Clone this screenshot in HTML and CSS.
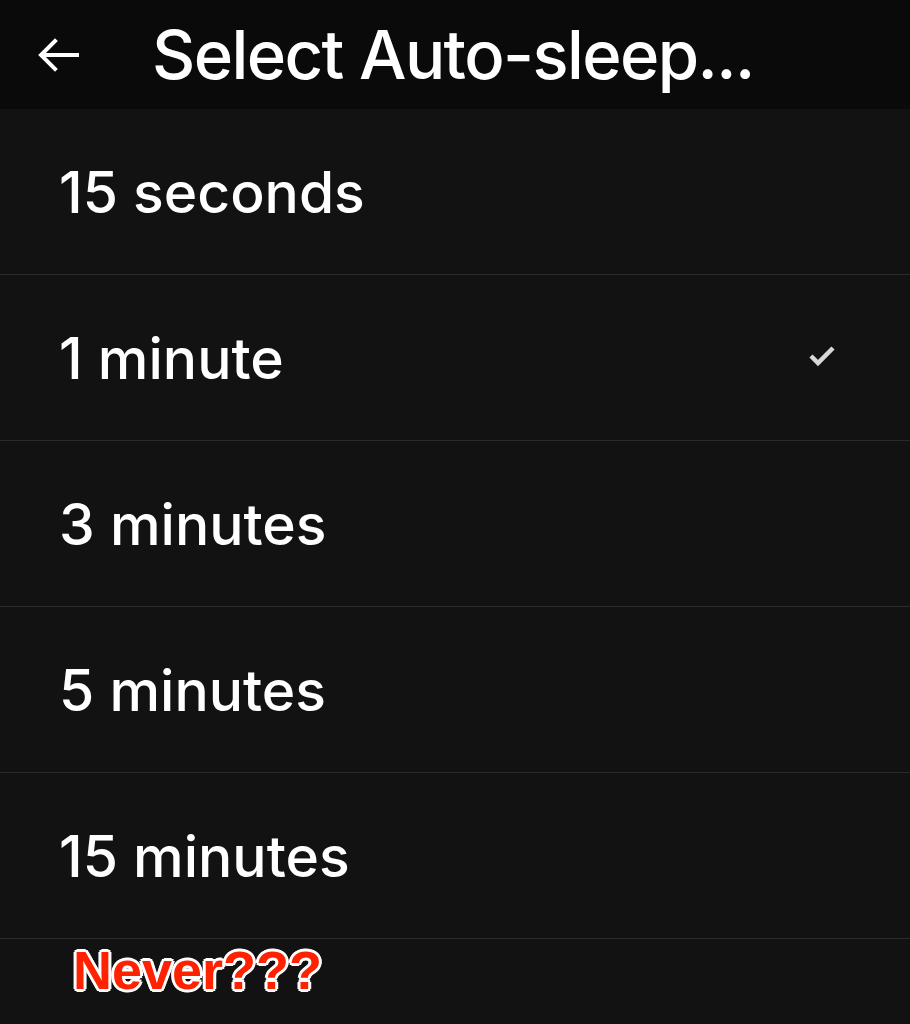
FILE: index.html
```html
<!DOCTYPE html>
<html lang="en">
<head>
    <meta charset="UTF-8">
    <meta name="viewport" content="width=device-width, initial-scale=1.0">
    <title>Select Auto-sleep</title>
    <link rel="stylesheet" href="styles.css">
</head>
<body>
    <div class="topbar">
        <span class="back">
            <svg width="42" height="36" viewBox="0 0 42 36">
                <path d="M40 18H5M18 4L4 18l14 14" fill="none" stroke="#fff" stroke-width="4" stroke-linecap="square"/>
            </svg>
        </span>
        <h1 class="title">Select Auto-sleep...</h1>
    </div>

    <ul class="options">
        <li class="option">15 seconds</li>
        <li class="option">1 minute
            <svg class="check" width="28" height="22" viewBox="0 0 28 22">
                <path d="M3 11l7 7L25 3" fill="none" stroke="#d8d8d8" stroke-width="4.5"/>
            </svg>
        </li>
        <li class="option">3 minutes</li>
        <li class="option">5 minutes</li>
        <li class="option">15 minutes</li>
    </ul>

    <div class="never">Never???</div>
</body>
</html>
```

FILE: styles.css
```css
body {
    margin: 0;
    background-color: #121212;
    color: #fff;
    font-family: Inter, "Noto Sans", sans-serif;
    height: 1024px;
    overflow: hidden;
}
.topbar {
    height: 109px;
    background-color: #0a0a0a;
    display: flex;
    align-items: center;
}
.back {
    width: 152px;
    display: flex;
    padding-left: 37px;
    box-sizing: border-box;
}
.title {
    margin: 0;
    font-size: 67px;
    font-weight: 500;
    letter-spacing: -1.6px;
}
.options {
    list-style: none;
    margin: 0;
    padding: 0;
}
.option {
    border-bottom: 1px solid #2a2a2a;
    display: flex;
    align-items: center;
    justify-content: space-between;
    padding: 2px 74px 0 59px;
    box-sizing: border-box;
    height: 166px;
    font-size: 57px;
    font-weight: 500;
}
.check {
    margin-top: -6px;
}
.never {
    padding: 0 0 0 73px;
    font-family: "Liberation Sans", Arial, sans-serif;
    font-weight: bold;
    font-size: 54px;
    color: #ff2200;
    text-shadow:
        3px 0 0 #fff, -3px 0 0 #fff, 0 3px 0 #fff, 0 -3px 0 #fff,
        2px 2px 0 #fff, -2px 2px 0 #fff, 2px -2px 0 #fff, -2px -2px 0 #fff;
}
```
